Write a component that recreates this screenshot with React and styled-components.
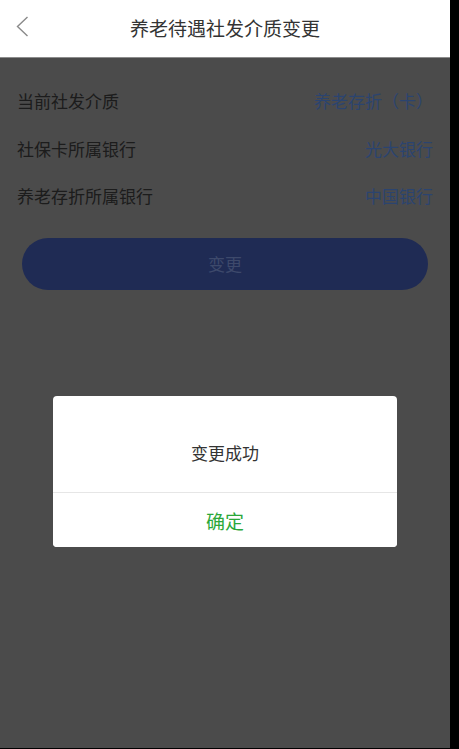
import React from "react";
import styled, { createGlobalStyle } from "styled-components";

const GlobalStyle = createGlobalStyle`
  html, body {
    margin: 0;
    padding: 0;
    background: #000;
  }
  body {
    font-family: "Noto Sans CJK SC", "Noto Sans", sans-serif;
  }
`;

const rows = [
  { label: "当前社发介质", value: "养老存折（卡）" },
  { label: "社保卡所属银行", value: "光大银行" },
  { label: "养老存折所属银行", value: "中国银行" },
];

const App = () => {
  return (
    <>
      <GlobalStyle />
      <Screen>
        <Header>
          <BackButton aria-label="返回">
            <svg width="13" height="21" viewBox="0 0 13 21">
              <polyline
                points="11.5,1 1.5,10.5 11.5,20"
                fill="none"
                stroke="#8a8a8a"
                strokeWidth="1.4"
              />
            </svg>
          </BackButton>
          <Title>养老待遇社发介质变更</Title>
        </Header>

        <Content>
          <InfoList>
            {rows.map((row) => (
              <InfoRow key={row.label}>
                <Label>{row.label}</Label>
                <Value>{row.value}</Value>
              </InfoRow>
            ))}
          </InfoList>
          <SubmitButton>变更</SubmitButton>

          <Mask>
            <Dialog>
              <DialogBody>变更成功</DialogBody>
              <DialogAction>确定</DialogAction>
            </Dialog>
          </Mask>
        </Content>
      </Screen>
    </>
  );
};

export default App;

/* styles */

const Screen = styled.div`
  width: 450px;
  height: 748px;
  display: flex;
  flex-direction: column;
  background: #969696;
  overflow: hidden;
`;

const Header = styled.header`
  position: relative;
  height: 57px;
  flex-shrink: 0;
  background: #fff;
  border-bottom: 1px solid #8c8c8c;
  display: flex;
  align-items: center;
  justify-content: center;
`;

const BackButton = styled.button`
  position: absolute;
  left: 16px;
  top: 16px;
  padding: 0;
  border: none;
  background: none;
  display: flex;
`;

const Title = styled.h1`
  margin: 0;
  font-size: 19px;
  font-weight: 400;
  color: #333;
  line-height: 1;
  margin-top: -2px;
`;

const Content = styled.main`
  position: relative;
  flex: 1;
  padding-top: 19px;
  display: flex;
  flex-direction: column;
`;

const InfoList = styled.div`
  display: flex;
  flex-direction: column;
  padding: 0 17px 0 17px;
`;

const InfoRow = styled.div`
  height: 47.5px;
  display: flex;
  align-items: center;
  justify-content: space-between;
  font-size: 17px;
`;

const Label = styled.span`
  color: #383838;
`;

const Value = styled.span`
  color: #5789df;
`;

const SubmitButton = styled.button`
  margin: 18px 22px 0 22px;
  height: 52px;
  border: none;
  border-radius: 26px;
  background: #3e56a9;
  color: #7b92d6;
  font-family: inherit;
  font-size: 17px;
`;

const Mask = styled.div`
  position: absolute;
  inset: 0;
  background: rgba(0, 0, 0, 0.5);
  display: flex;
  justify-content: center;
  align-items: flex-start;
  padding-top: 338px;
`;

const Dialog = styled.div`
  width: 344px;
  background: #fff;
  border-radius: 4px;
  overflow: hidden;
  display: flex;
  flex-direction: column;
`;

const DialogBody = styled.div`
  height: 97px;
  display: flex;
  align-items: center;
  justify-content: center;
  padding-top: 16px;
  box-sizing: border-box;
  font-size: 17px;
  color: #333;
  border-bottom: 1px solid #e6e6e6;
`;

const DialogAction = styled.button`
  height: 54px;
  border: none;
  background: #fff;
  font-family: inherit;
  font-size: 19px;
  color: #2ba83a;
  padding: 0;
`;
